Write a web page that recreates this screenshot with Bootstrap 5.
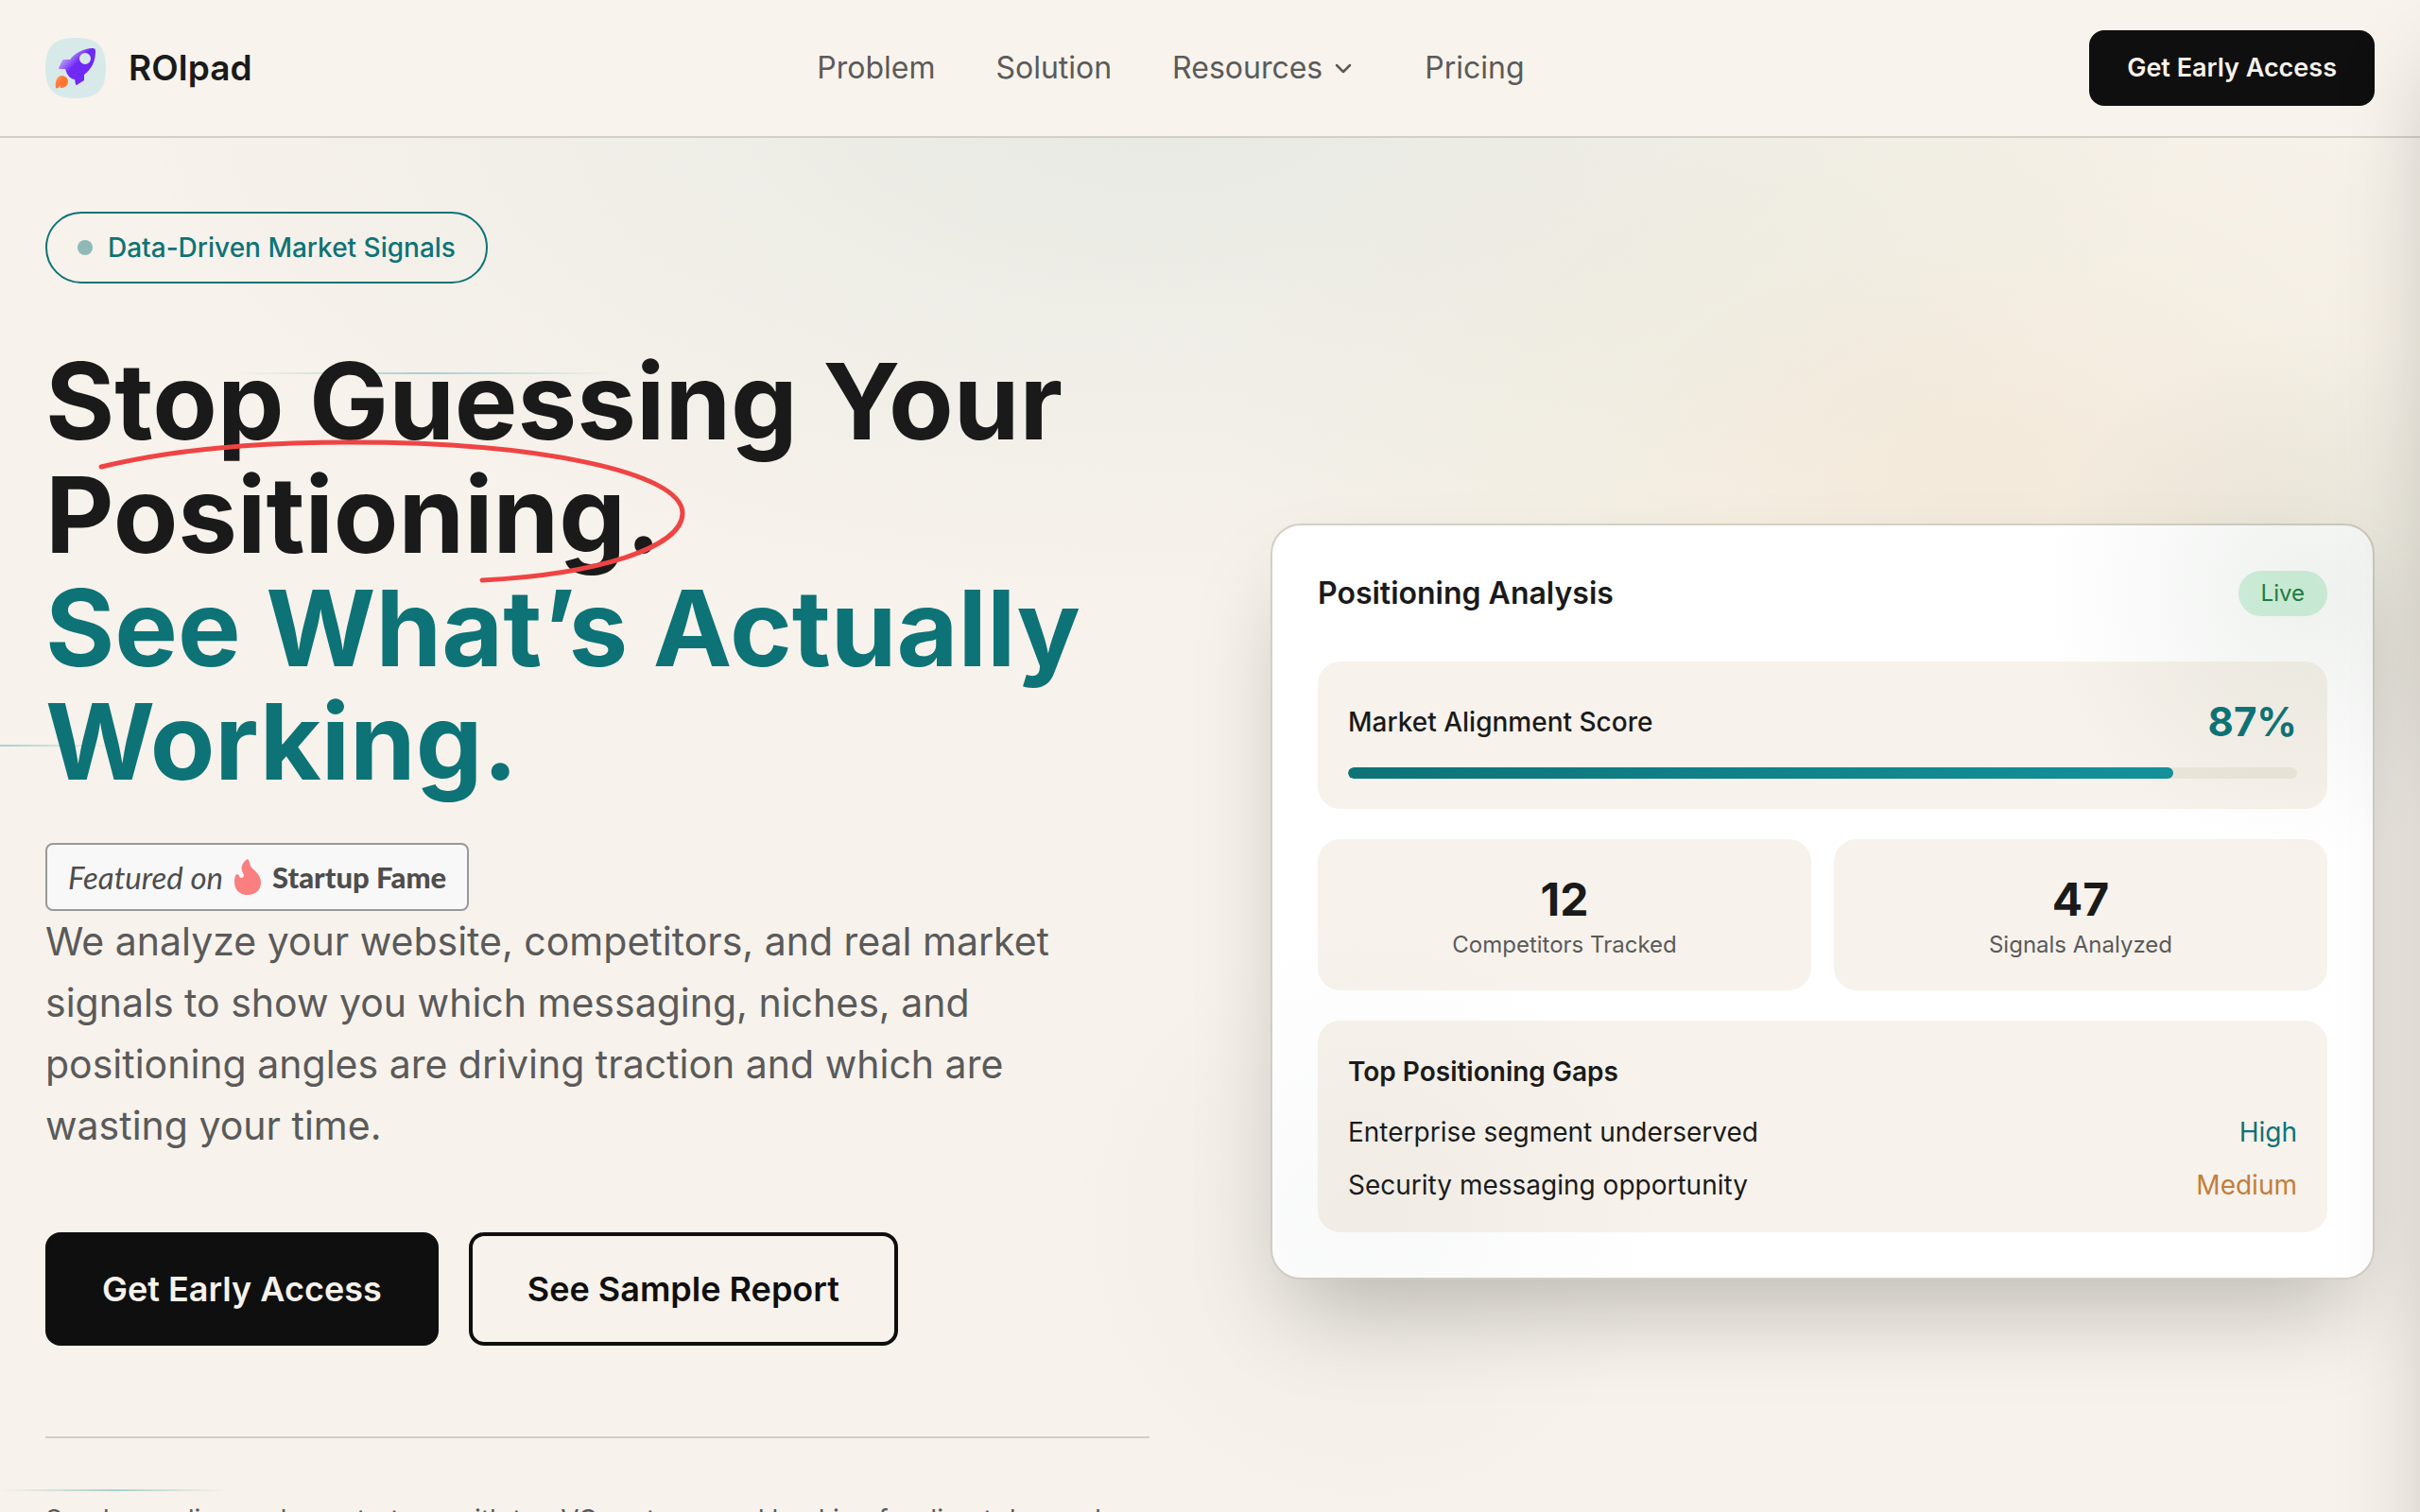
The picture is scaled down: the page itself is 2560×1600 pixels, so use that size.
<!DOCTYPE html>
<html lang="en">
<head>
<meta charset="utf-8">
<meta name="viewport" content="width=device-width, initial-scale=1">
<title>ROIpad</title>
<link href="https://cdn.jsdelivr.net/npm/bootstrap@5.3.0/dist/css/bootstrap.min.css" rel="stylesheet">
<style>
:root{--teal:#0d7377;--ink:#1a1a1a;--black:#0f0f0f;--muted:#5a5a5a;--cream:#f7f2eb;--line:#d4cfc4}
body{background:var(--cream);color:var(--ink);font-family:Inter,"Liberation Sans",sans-serif;font-size:28px;overflow:hidden;height:100vh}
a{text-decoration:none}
.text-teal{color:var(--teal)}
.text-soft{color:var(--muted)}
.text-amber{color:#c27e3a}

/* header */
.site-nav{background:rgba(247,243,235,.92);border-bottom:2px solid var(--line);padding:32px 48px;position:relative;z-index:5}
.site-links{gap:64px}
.brand-name{font-size:37px;line-height:48px;font-weight:600;color:var(--ink)}
.nav-item-link{font-size:32px;line-height:48px;color:var(--muted)}
.menu-btn{border:0;background:none;padding:0}
.btn-ink,.btn-line{border-radius:16px;font-weight:600;padding:0;--bs-btn-border-width:4px}
.btn-ink{--bs-btn-bg:var(--black);--bs-btn-border-color:var(--black);--bs-btn-color:#f7f2eb;--bs-btn-hover-bg:#2a2a2a;--bs-btn-hover-color:#f7f2eb}
.btn-line{--bs-btn-bg:transparent;--bs-btn-border-color:var(--black);--bs-btn-color:var(--black);--bs-btn-hover-bg:var(--black);--bs-btn-hover-color:#f7f2eb}
.btn-top{font-size:27px;line-height:72px;padding-inline:36px}
.btn-hero{font-size:36px;line-height:112px;padding-inline:56px}
.btn-line.btn-hero{padding-inline:58px}

/* hero */
.hero{position:relative;overflow:hidden;padding:78px 48px 0;
 background:
  radial-gradient(ellipse 420px 260px at 82% 24%,rgba(245,160,110,.06),transparent),
  radial-gradient(ellipse 760px 460px at 80% 20%,rgba(200,185,100,.08),rgba(200,185,100,.05) 50%,transparent),
  radial-gradient(ellipse 1100px 520px at 48% -2%,rgba(13,115,119,.065),rgba(13,115,119,.03) 50%,transparent)}
.hero .row{--bs-gutter-x:128px}
.pill-tag{border:2px solid var(--teal);border-radius:38px;padding:0 32px;line-height:72px;font-weight:500;gap:16px}
.pill-dot{width:16px;height:16px;border-radius:50%;background:#8fb9b7}
.hero-title{font-size:112px;line-height:120px;font-weight:700;margin:64px 0 48px}
.circled{position:relative;display:inline-block}
.circled svg{position:absolute;left:0;top:0;width:100%;height:100%;overflow:visible}
.fame{border:2px solid #999;border-radius:8px;background:#f8f8f8;padding:0 22px;line-height:68px;font-family:Lato,sans-serif;font-size:31px;color:#4d4d4d}
.fame em{font-size:33px}
.fame strong{font-weight:900}
.hero-copy{font-size:41px;line-height:65px;margin:0 0 80px}
.hero-actions{gap:32px}
.proof{border-top:2px solid var(--line);margin-top:96px;padding:64px 0 8px;line-height:45px}

/* faint signal lines behind the copy */
.streak{position:absolute;height:2px;background:linear-gradient(90deg,transparent,rgba(20,145,155,.35),transparent)}
.streak-a{left:250px;top:248px;width:400px}
.streak-b{left:-120px;top:642px;width:240px}
.streak-c{left:0;top:1430px;width:240px}

/* analysis card */
.panel{position:relative;background:#fff;border:2px solid var(--line);border-radius:32px;padding:48px;box-shadow:0 50px 100px -24px rgba(0,0,0,.25)}
.panel-title{font-size:32px;line-height:48px;font-weight:600;margin:0}
.live{background:#d3f4df;color:#1c7f42;border-radius:24px;padding:0 24px;font-size:24px;line-height:48px}
.tile{background:var(--cream);border-radius:24px;padding:32px}
.tile-pair{margin:32px 0}
.figure-num{font-size:48px;line-height:64px;font-weight:700}
.figure-pct{font-size:42px}
.caption-sm{font-size:24px;line-height:32px}
.meter{height:12px;border-radius:6px;background:#ebe6db;--bs-progress-bar-bg:transparent}
.meter .progress-bar{border-radius:6px;background:linear-gradient(90deg,#0d7377,#14919b)}
.gap-title{line-height:44px;font-weight:600;font-size:28px;margin:0 0 24px}
.gap-row{line-height:36px}
.gap-row+.gap-row{margin-top:20px}
.glow{position:absolute;border-radius:50%;pointer-events:none}
.glow-a{width:560px;height:560px;right:-210px;top:-210px;background:radial-gradient(closest-side,rgba(50,80,50,.08),rgba(50,80,50,.04) 50%,transparent)}
.glow-b{width:640px;height:640px;left:-220px;bottom:-260px;background:radial-gradient(closest-side,rgba(50,80,60,.035),rgba(50,80,60,.015) 55%,transparent)}

.drawer-layer{position:fixed;inset:0;overflow:hidden;pointer-events:none;z-index:10}
.drawer{position:absolute;top:0;left:100%;width:640px;height:120%;box-shadow:0 50px 100px -24px rgba(0,0,0,.25)}
</style>
<script src="https://cdn.jsdelivr.net/npm/bootstrap@5.3.0/dist/js/bootstrap.bundle.min.js"></script>
</head>
<body>
<header class="site-nav d-flex justify-content-between align-items-center">
  <a href="#" class="d-flex align-items-center gap-4">
    <svg width="64" height="64" viewBox="0 0 64 64" aria-hidden="true">
      <defs>
        <linearGradient id="hull" x1="0.1" y1="0.1" x2="0.6" y2="0.6"><stop offset="0" stop-color="#c3aefa"/><stop offset=".35" stop-color="#a57ff8"/><stop offset=".7" stop-color="#7029f5"/></linearGradient>
        <linearGradient id="burn" x1="0" y1="0" x2=".8" y2=".6"><stop offset="0" stop-color="#ffa678"/><stop offset=".6" stop-color="#ff7433"/></linearGradient>
      </defs>
      <path d="M32 0C55 0 64 9 64 32S55 64 32 64 0 55 0 32 9 0 32 0Z" fill="#d7eae9"/>
      <path fill="url(#hull)" fill-rule="evenodd" d="M26 23C31 16 41 11 50 11Q53 11 53 14C53 25 49 33 41 39V45L33 50Q32 50 32 49L31 44C27 44 23 40 21 33H15Q14 33 14 32L18 24Q19 23 20 23ZM42 16A6 6 0 1 0 42 28A6 6 0 1 0 42 16Z"/>
      <path fill="url(#burn)" d="M11 53C10 46 12 40 18 40C22 41 24 43 24 46C24 50 21 53 17 53H16L15.500 50L14 52.500Q12 54 11 53Z"/>
    </svg>
    <span class="brand-name">ROIpad</span>
  </a>
  <nav class="site-links d-flex align-items-center" aria-label="Main">
    <a href="#problem" class="nav-item-link">Problem</a>
    <a href="#solution" class="nav-item-link">Solution</a>
    <button type="button" class="menu-btn nav-item-link d-flex align-items-center" aria-haspopup="true">
      <span>Resources</span>
      <svg class="ms-2 me-2" width="28" height="28" viewBox="0 0 28 28" fill="none" stroke="currentColor" stroke-width="2.500" stroke-linecap="round" stroke-linejoin="round" aria-hidden="true"><path d="M7 11l7 7 7-7"/></svg>
    </button>
    <a href="#pricing" class="nav-item-link">Pricing</a>
  </nav>
  <button type="button" class="btn btn-ink btn-top">Get Early Access</button>
</header>

<main class="hero">
  <span class="streak streak-a"></span><span class="streak streak-b"></span><span class="streak streak-c"></span>
  <div class="row align-items-center">
    <section class="col-6 position-relative">
      <div class="pill-tag text-teal d-inline-flex align-items-center"><span class="pill-dot"></span>Data-Driven Market Signals</div>
      <h1 class="hero-title">Stop Guessing Your<br>
        <span class="circled">Positioning.<svg fill="none" stroke="#ef4444" stroke-width="5" stroke-linecap="round" aria-hidden="true"><path d="M59 10C132 -8 227 -16 323 -16C522 -16 674 16 674 59C674 96 582 124 462 130"/></svg></span><br>
        <span class="text-teal">See What’s Actually<br>Working.</span>
      </h1>
      <a href="#" class="fame d-inline-flex align-items-center align-top">
        <em>Featured on</em>
        <svg class="mx-2" width="36" height="38" viewBox="-4 0 36 38" aria-hidden="true"><path fill="#fa7f7f" d="M14 0C16 1 16 6 18 9C22 13 28 17 28 25C28 33 22 38 14 38S0 33 0 24C0 20 1 16 3 16S5 20 7 20Q10 20 10 17C8 13 7 10 8 7Q10 2 14 0Z"/></svg>
        <strong>Startup Fame</strong>
      </a>
      <p class="hero-copy text-soft">We analyze your website, competitors, and real market<br>signals to show you which messaging, niches, and<br>positioning angles are driving traction and which are<br>wasting your time.</p>
      <div class="hero-actions d-flex">
        <button type="button" class="btn btn-ink btn-hero">Get Early Access</button>
        <button type="button" class="btn btn-line btn-hero">See Sample Report</button>
      </div>
      <p class="proof text-soft mb-0">Seed spending and our strategy with top VC partners and backing for direct demand, shared early with founders.</p>
    </section>

    <section class="col-6">
      <div class="panel">
        <div class="d-flex justify-content-between align-items-center mb-5">
          <h2 class="panel-title">Positioning Analysis</h2>
          <span class="live">Live</span>
        </div>
        <div class="tile">
          <div class="d-flex justify-content-between align-items-center mb-3">
            <span class="fw-medium" id="score">Market Alignment Score</span>
            <span class="figure-num figure-pct text-teal">87%</span>
          </div>
          <div class="progress meter" role="progressbar" aria-labelledby="score" aria-valuenow="87" aria-valuemin="0" aria-valuemax="100"><div class="progress-bar" style="width:87%"></div></div>
        </div>
        <div class="tile-pair d-flex gap-4 text-center">
          <div class="tile flex-fill w-50"><div class="figure-num">12</div><div class="caption-sm text-soft">Competitors Tracked</div></div>
          <div class="tile flex-fill w-50"><div class="figure-num">47</div><div class="caption-sm text-soft">Signals Analyzed</div></div>
        </div>
        <div class="tile">
          <h3 class="gap-title">Top Positioning Gaps</h3>
          <div class="gap-row d-flex justify-content-between"><span>Enterprise segment underserved</span><span class="text-teal">High</span></div>
          <div class="gap-row d-flex justify-content-between"><span>Security messaging opportunity</span><span class="text-amber">Medium</span></div>
        </div>
        <span class="glow glow-a"></span><span class="glow glow-b"></span>
      </div>
    </section>
  </div>
</main>
<div class="drawer-layer" aria-hidden="true"><div class="drawer"></div></div>
</body>
</html>
